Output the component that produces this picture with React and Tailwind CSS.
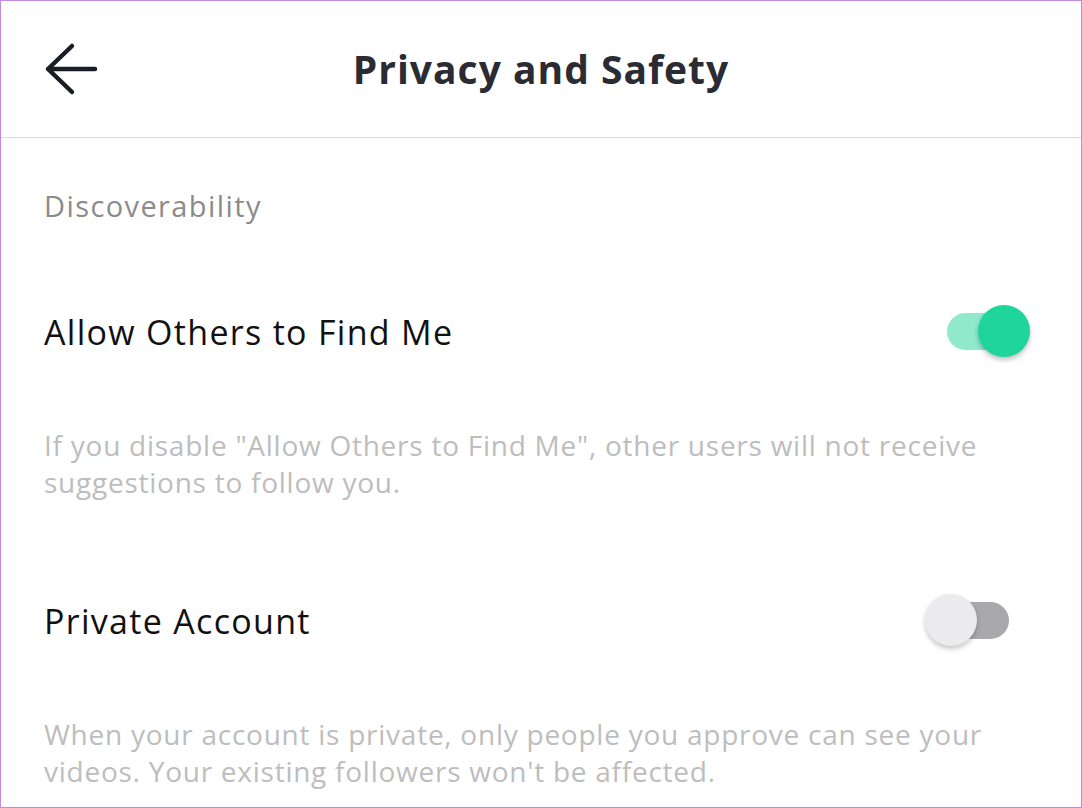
import { useState } from "react";

function BackArrow() {
  return (
    <svg width="56" height="56" viewBox="0 0 56 56" fill="none">
      <path
        d="M4 28H51M28 5L4 28L28 51"
        stroke="#1b1d24"
        strokeWidth="4.5"
        strokeLinecap="round"
        strokeLinejoin="round"
      />
    </svg>
  );
}

function Toggle({ on, onChange }) {
  return (
    <button
      type="button"
      onClick={() => onChange(!on)}
      className="relative h-[54px] w-[105px] shrink-0"
    >
      <span
        className={
          on
            ? "absolute left-[22px] top-[8px] h-[37px] w-[62px] rounded-full bg-[#8fe9ca]"
            : "absolute left-[22px] top-[8px] h-[37px] w-[62px] rounded-full bg-[#a9a8ad]"
        }
      />
      <span
        className={
          on
            ? "absolute left-[53px] top-0 h-[52px] w-[52px] rounded-full bg-[#1fd59c] shadow-[0_3px_5px_rgba(0,0,0,0.25)]"
            : "absolute left-0 top-0 h-[52px] w-[52px] rounded-full bg-[#ebebed] shadow-[0_3px_5px_rgba(0,0,0,0.22)]"
        }
      />
    </button>
  );
}

export default function App() {
  const [findMe, setFindMe] = useState(true);
  const [privateAccount, setPrivateAccount] = useState(false);

  return (
    <main
      className="h-[808px] w-[1082px] overflow-hidden border border-[#c48ae0] bg-white"
      style={{ fontFamily: "'Open Sans', 'Noto Sans', sans-serif" }}
    >
      <header className="grid h-[137px] grid-cols-[1fr_auto_1fr] items-center border-b border-[#d9d9d9]">
        <button type="button" className="ml-[43px] justify-self-start">
          <BackArrow />
        </button>
        <h1 className="text-[39px] font-bold tracking-[1px] text-[#2a2b33]">
          Privacy and Safety
        </h1>
        <div />
      </header>

      <section className="pl-[43px] pr-[51px] pt-[48px]">
        <p className="text-[29px] leading-[40px] tracking-[1.4px] text-[#8b8b8b]">
          Discoverability
        </p>

        <div className="mt-[66px] flex h-[80px] items-center justify-between">
          <span className="text-[34px] tracking-[1.3px] text-[#111111]">
            Allow Others to Find Me
          </span>
          <Toggle on={findMe} onChange={setFindMe} />
        </div>

        <p className="mt-[55px] text-[28px] leading-[37px] tracking-[0.75px] text-[#bdbdbd]">
          If you disable "Allow Others to Find Me", other users will not receive
          suggestions to follow you.
        </p>

        <div className="mt-[80px] flex h-[80px] items-center justify-between">
          <span className="text-[34px] tracking-[1.3px] text-[#111111]">
            Private Account
          </span>
          <Toggle on={privateAccount} onChange={setPrivateAccount} />
        </div>

        <p className="mt-[55px] text-[28px] leading-[37px] tracking-[0.75px] text-[#bdbdbd]">
          When your account is private, only people you approve can see your
          videos. Your existing followers won't be affected.
        </p>
      </section>
    </main>
  );
}
